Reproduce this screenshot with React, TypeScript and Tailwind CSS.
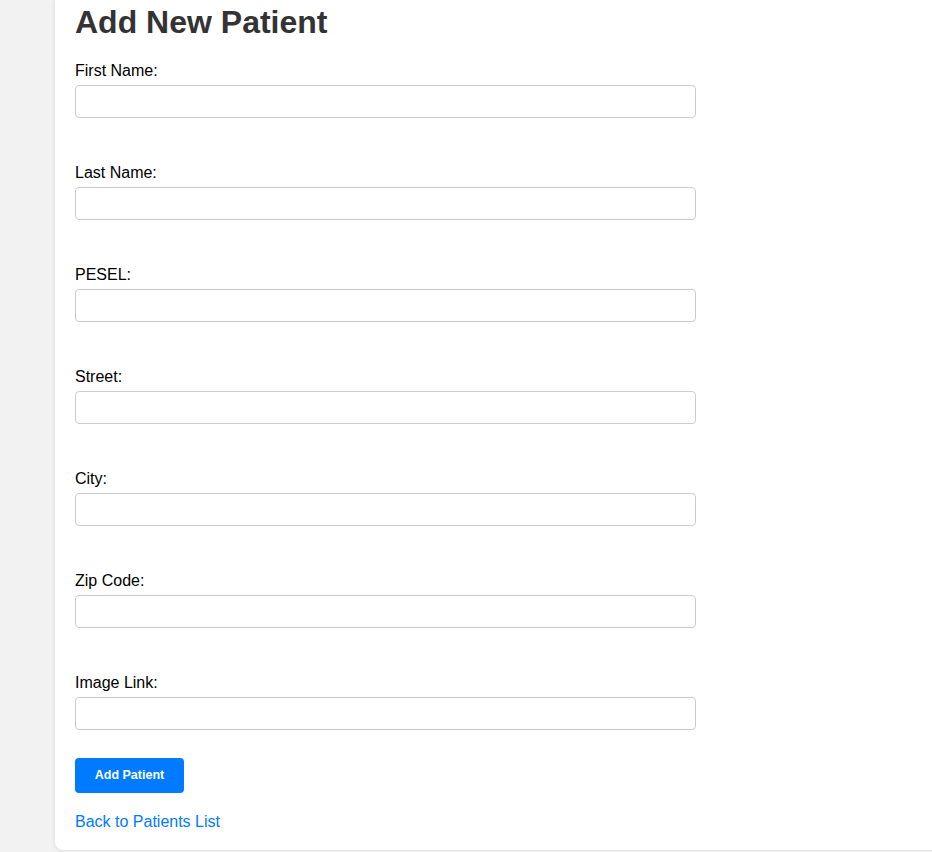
import React from "react";

const fields = ["First Name:", "Last Name:", "PESEL:", "Street:", "City:", "Zip Code:", "Image Link:"];

export default function App() {
  return (
    <div
      className="w-full h-[852px] bg-[#f2f2f2] overflow-hidden"
      style={{ fontFamily: '"Liberation Sans", Arial, sans-serif' }}
    >
      <div className="ml-[55px] w-[920px] bg-white rounded-b-lg shadow-[0_0_4px_rgba(0,0,0,0.12)] pt-[4px] pl-[20px] pb-[19px]">
        <h1 className="text-[32px] font-bold leading-[37px] text-[#333] mb-[21px]">Add New Patient</h1>
        {fields.map((f, i) => (
          <div key={f} className={i === fields.length - 1 ? "mb-[28px]" : "mb-[46px]"}>
            <label className="block text-[16px] leading-[18px] text-black mb-[5px]">{f}</label>
            <input
              type="text"
              className="block w-[621px] h-[33px] border border-[#ccc] rounded-[4px] bg-white px-2 outline-none"
            />
          </div>
        ))}
        <button className="flex items-center justify-center w-[109px] h-[35px] bg-[#007bff] text-white text-[12.5px] font-bold rounded-[4px]">
          Add Patient
        </button>
        <a href="#" className="block mt-[20px] text-[16px] leading-[18px] text-[#007bff]">
          Back to Patients List
        </a>
      </div>
    </div>
  );
}
